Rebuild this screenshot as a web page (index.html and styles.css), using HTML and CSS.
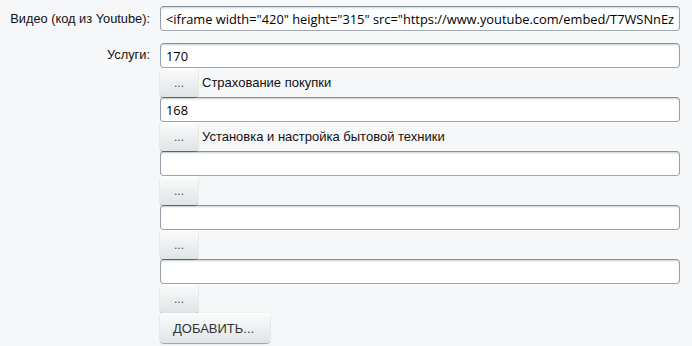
FILE: index.html
```html
<!DOCTYPE html>
<html lang="ru">
<head>
    <meta charset="UTF-8">
    <title>Редактирование элемента</title>
    <link rel="stylesheet" href="styles.css">
</head>
<body>
    <div class="edit-form">
        <div class="field-row">
            <div class="field-label">Видео (код из Youtube):</div>
            <div class="field-value">
                <input type="text" class="adm-input" value='&lt;iframe width="420" height="315" src="https://www.youtube.com/embed/T7WSNnEz7Hg" frameborder="0" allowfullscreen&gt;&lt;/iframe&gt;'>
            </div>
        </div>

        <div class="field-row">
            <div class="field-label label-services">Услуги:</div>
            <div class="field-value">
                <div class="link-item">
                    <input type="text" class="adm-input" value="170">
                    <div class="link-line">
                        <button type="button" class="adm-btn btn-pick">...</button>
                        <span class="link-name">Страхование покупки</span>
                    </div>
                </div>
                <div class="link-item">
                    <input type="text" class="adm-input" value="168">
                    <div class="link-line">
                        <button type="button" class="adm-btn btn-pick">...</button>
                        <span class="link-name">Установка и настройка бытовой техники</span>
                    </div>
                </div>
                <div class="link-item">
                    <input type="text" class="adm-input" value="">
                    <div class="link-line">
                        <button type="button" class="adm-btn btn-pick">...</button>
                    </div>
                </div>
                <div class="link-item">
                    <input type="text" class="adm-input" value="">
                    <div class="link-line">
                        <button type="button" class="adm-btn btn-pick">...</button>
                    </div>
                </div>
                <div class="link-item">
                    <input type="text" class="adm-input" value="">
                    <div class="link-line">
                        <button type="button" class="adm-btn btn-pick">...</button>
                    </div>
                </div>
                <button type="button" class="adm-btn btn-add">ДОБАВИТЬ...</button>
            </div>
        </div>
    </div>
</body>
</html>
```

FILE: styles.css
```css
body {
    margin: 0;
    background-color: #f5f7f9;
    font-family: "Liberation Sans", Arial, sans-serif;
    font-size: 13px;
    color: #000;
}
.edit-form {
    padding-top: 6px;
}
.field-row {
    display: flex;
    margin-bottom: 12px;
}
.field-label {
    width: 160px;
    flex-shrink: 0;
    text-align: right;
    padding-top: 5px;
    padding-right: 10px;
    box-sizing: border-box;
    font-size: 12.8px;
    color: #111;
}
.label-services {
    padding-top: 4px;
}
.field-value {
    width: 520px;
}
.adm-input {
    display: block;
    width: 100%;
    height: 25px;
    padding: 0 5px;
    margin: 0;
    border: 1px solid;
    border-color: #87919c #959ea9 #9ea7b1 #959ea9;
    border-radius: 4px;
    box-shadow: 0 1px 0 0 rgba(255,255,255,0.3), inset 0 2px 2px -1px rgba(180,188,191,0.7);
    background: #fff;
    box-sizing: border-box;
    font-family: "Open Sans", sans-serif;
    font-size: 12.85px;
    color: #000;
    outline: none;
}
.link-line {
    display: flex;
    align-items: center;
    height: 29px;
}
.link-name {
    margin-left: 4px;
    color: #111;
}
.adm-btn {
    height: 29px;
    margin: 0;
    border: none;
    border-radius: 4px;
    background: linear-gradient(to bottom, #fbfcfc, #dfe4e6);
    box-shadow: 0 0 1px rgba(0,0,0,0.25), 0 1px 1px rgba(0,0,0,0.35), inset 0 1px #fff, inset 0 0 1px rgba(255,255,255,0.5);
    font-family: "Liberation Sans", Arial, sans-serif;
    color: #3f4b54;
    cursor: pointer;
}
.btn-pick {
    width: 38px;
    padding: 0;
    font-size: 12px;
}
.btn-add {
    width: 110px;
    height: 30px;
    padding: 0 13px;
    font-size: 13px;
    color: #333;
    text-align: left;
}
```
